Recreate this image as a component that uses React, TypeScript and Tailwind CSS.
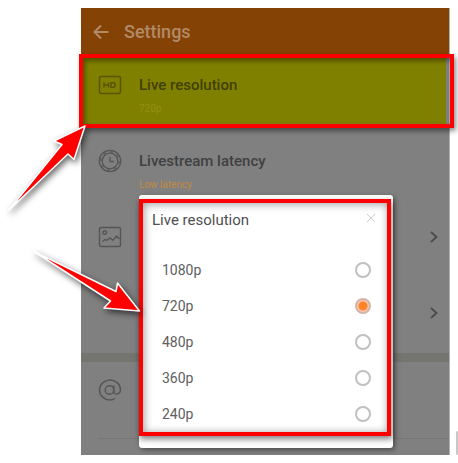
import React, { ReactNode, useState } from 'react'

const RESOLUTIONS = ['1080p', '720p', '480p', '360p', '240p']

function BackIcon() {
  return (
    <svg viewBox="0 0 16 16" className="w-4 h-4" fill="none" stroke="currentColor" strokeWidth="2">
      <path d="M15.5 8H2M8 1.5L1.5 8L8 14.5" />
    </svg>
  )
}

function HdIcon() {
  return (
    <svg viewBox="0 0 24 24" className="w-6 h-6" fill="none" stroke="currentColor" strokeWidth="1.5">
      <rect x="1.5" y="3.5" width="21" height="17" rx="2" />
      <path d="M6 9.5v5M10.5 9.5v5M6 12h4.500M13 9.7h2a2.3 2.3 0 0 1 0 4.6h-2z" />
    </svg>
  )
}

function LatencyIcon() {
  return (
    <svg viewBox="0 0 24 24" className="w-6 h-6" fill="none" stroke="currentColor" strokeWidth="1.3">
      <circle cx="12" cy="12" r="10.7" />
      <circle cx="12" cy="12" r="7.8" />
      <circle cx="12" cy="12" r="9.2" strokeWidth="2.5" strokeDasharray="3 4.2" strokeOpacity="0.6" />
      <path d="M12 8v4.500h4" />
    </svg>
  )
}

function PictureIcon() {
  return (
    <svg viewBox="0 0 24 24" className="w-6 h-6" fill="none" stroke="currentColor" strokeWidth="1.4">
      <rect x="1.5" y="2.5" width="21" height="19" rx="1.5" />
      <circle cx="6.7" cy="7.500" r="1.8" />
      <path d="M4.5 16.5l2.500-2l2 .8l3-2.300l3 2.300l3.500-4.300l3 3" />
    </svg>
  )
}

function AtIcon() {
  return (
    <svg viewBox="0 0 24 24" className="w-6 h-6" fill="none" stroke="currentColor" strokeWidth="1.5">
      <circle cx="11.5" cy="12" r="4.3" />
      <path d="M15.8 7.5V14c0 3 6.7 3 6.700-2.500A10.500 10 0 1 0 12 22c2 0 3.500-.5 5-1.500" />
    </svg>
  )
}

function Chevron() {
  return (
    <svg viewBox="0 0 10 14" className="w-[10px] h-[14px]" fill="none" stroke="currentColor" strokeWidth="1.8">
      <path d="M2 2l5.500 5L2 12" />
    </svg>
  )
}

function SettingRow({
  icon,
  title,
  detail,
  chevron,
}: {
  icon?: ReactNode
  title?: string
  detail?: ReactNode
  chevron?: boolean
}) {
  return (
    <div className="flex h-[76px] pt-6 pl-[17px] pr-[10px] text-[#565656]">
      <div className="w-6 h-6 mr-[17px]">{icon}</div>
      <div className="flex-1">
        {title && <h2 className="text-[15px] leading-6 font-medium text-[#404040]">{title}</h2>}
        {detail}
      </div>
      {chevron && (
        <button aria-label="Open" className="h-6 flex items-center text-[#4a4a4a]">
          <Chevron />
        </button>
      )}
    </div>
  )
}

function ResolutionDialog() {
  const [selected, setSelected] = useState('720p')

  return (
    <div
      role="dialog"
      aria-label="Live resolution"
      className="absolute left-[58px] right-[56px] top-[187px] pt-1 pr-[2px] pb-3 rounded-[3px] bg-white shadow-[2px_2px_5px_rgba(0,0,0,0.4)]"
    >
      <div className="border-4 border-[#ff0000] shadow-[1px_3px_6px_rgba(0,0,0,0.5),inset_1px_1px_8px_rgba(0,0,0,0.4)]">
        <div className="flex items-center justify-between h-[34px] mb-[15px] pl-[9px] pr-[11px]">
          <h2 className="text-[15px] text-[#505050]">Live resolution</h2>
          <button aria-label="Close" className="mb-1 text-[#cccccc]">
            <svg viewBox="0 0 10 10" className="w-[10px] h-[10px]" fill="none" stroke="currentColor">
              <path d="M1 1l8 8M9 1l-8 8" />
            </svg>
          </button>
        </div>
        {RESOLUTIONS.map((value) => (
          <label
            key={value}
            className="flex items-center justify-between h-9 pl-[19px] pr-4 text-sm text-[#606060]"
          >
            {value}
            <input
              type="radio"
              name="resolution"
              value={value}
              checked={selected === value}
              onChange={() => setSelected(value)}
              className="appearance-none w-4 h-4 rounded-full border-2 border-[#c0c0c0] bg-white checked:border-[#d0b5a8] checked:bg-[radial-gradient(circle,#ff8427_4px,#ffc4a8_5px)]"
            />
          </label>
        ))}
      </div>
    </div>
  )
}

function Arrows() {
  return (
    <svg
      viewBox="0 0 160 330"
      className="absolute left-0 top-0 w-[160px] h-[330px] pointer-events-none drop-shadow-[2px_3px_3px_rgba(0,0,0,0.6)]"
      fill="#ff0000"
      stroke="#ffffff"
      strokeWidth="1.5"
      strokeLinejoin="round"
    >
      <path d="M85 126L54 141L62 144.500L9 210L68 154L74 159.500Z" />
      <path d="M139.500 311L117.500 283L116 291.500L34 251.500L110.500 301L104 308Z" />
    </svg>
  )
}

export default function App() {
  return (
    <div className="relative overflow-hidden bg-white pt-2 pb-2 pl-[81px] pr-2 font-['Roboto','Liberation_Sans',sans-serif]">
      <main className="relative bg-[#808080] border-r border-[#b0b0b0]">
        <header className="flex items-center h-12 pl-3 gap-[15px] bg-[#854205] text-[#b28a68]">
          <button aria-label="Back">
            <BackIcon />
          </button>
          <h1 className="text-lg font-medium">Settings</h1>
        </header>

        <section className="flex h-[69px] mr-[3px] pt-[17px] pl-[17px] bg-[#808000] text-[#565600]">
          <div className="mr-[17px]">
            <HdIcon />
          </div>
          <div>
            <h2 className="text-[15px] leading-6 font-medium text-[#404000]">Live resolution</h2>
            <p className="text-[10px] leading-6 text-[#94900c]">720p</p>
          </div>
        </section>

        <SettingRow
          icon={<LatencyIcon />}
          title="Livestream latency"
          detail={<p className="text-[10px] leading-6 text-[#c08a40]">Low latency</p>}
        />
        <SettingRow icon={<PictureIcon />} chevron />
        <SettingRow chevron />
        <div className="h-[9px] bg-[#757570]" />
        <div className="flex h-[77px] pt-4 ml-[17px] border-b border-[#767676] text-[#565656]">
          <AtIcon />
        </div>
        <div className="h-4" />

        {/* callout frame around the resolution row */}
        <div className="absolute -left-[2px] -right-[5px] top-[46px] h-[74px] border-4 border-[#ff0000] pointer-events-none shadow-[2px_3px_5px_rgba(0,0,0,0.45),inset_2px_3px_5px_rgba(0,0,0,0.4)]" />

        <ResolutionDialog />
      </main>

      <Arrows />
      <div className="absolute right-0 bottom-2 w-[2px] h-6 rounded-l-full bg-[#c8c8c8]" />
    </div>
  )
}
